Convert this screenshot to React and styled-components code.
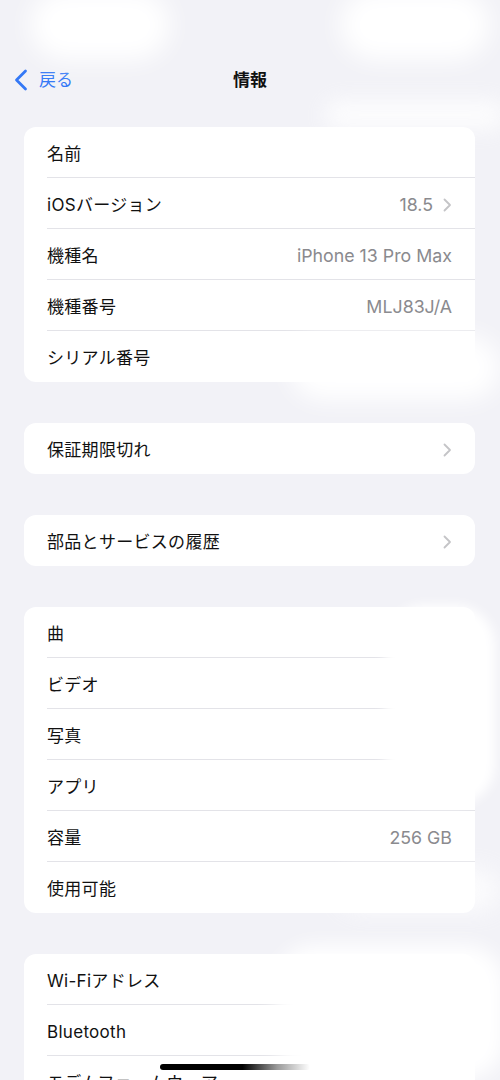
import React from 'react'
import { styled, createGlobalStyle } from 'styled-components'

const Global = createGlobalStyle`
    html, body {
        margin: 0;
        padding: 0;
        background: #f2f2f7;
        overflow: hidden;
    }
    body {
        font-family: "Inter", "Noto Sans CJK JP", sans-serif;
        -webkit-font-smoothing: antialiased;
    }
`

const Screen = styled.div`
    position: relative;
    width: 500px;
    height: 1080px;
    overflow: hidden;
    background: #f2f2f7;
    display: flex;
    flex-direction: column;
`

const NavBar = styled.div`
    flex-shrink: 0;
    display: grid;
    grid-template-columns: 1fr auto 1fr;
    align-items: center;
    height: 54px;
    padding: 53px 0 20px 14px;
`

const Back = styled.div`
    display: flex;
    align-items: center;
    gap: 11px;
    color: #3478f6;
    font-size: 17px;
    line-height: 22px;
`

const Title = styled.div`
    font-size: 17px;
    line-height: 22px;
    font-weight: 700;
    color: #111;
    transform: translateX(-7px);
`

const List = styled.div`
    flex-shrink: 0;
    display: flex;
    flex-direction: column;
    gap: 41px;
    padding: 0 25px 0 24px;
`

const Card = styled.div`
    flex-shrink: 0;
    display: flex;
    flex-direction: column;
    background: #fff;
    border-radius: 12px;
    overflow: hidden;
`

const Row = styled.div`
    flex-shrink: 0;
    box-sizing: border-box;
    height: 51px;
    padding-left: 23px;
    display: flex;
`

const RowInner = styled.div`
    flex: 1;
    display: flex;
    align-items: center;
    justify-content: space-between;
    padding: 3px 23px 0 0;
    border-bottom: ${(p) => (p.$last ? 'none' : '1px solid #e3e3e8')};
`

const Label = styled.span`
    font-size: 17px;
    line-height: 22px;
    color: #111;
    letter-spacing: 0.3px;
`

const Value = styled.span`
    display: flex;
    align-items: center;
    gap: 10px;
    font-size: 17.8px;
    line-height: 22px;
    color: #8a8a8e;
`

// blurred white patches that hide personal data in the screenshot
const Blob = styled.div`
    position: absolute;
    left: ${(p) => p.$x}px;
    top: ${(p) => p.$y}px;
    width: ${(p) => p.$w}px;
    height: ${(p) => p.$h}px;
    background: #fff;
    border-radius: 40px;
    filter: blur(${(p) => p.$b || 10}px);
    opacity: ${(p) => p.$o || 1};
    pointer-events: none;
`

const HomeBar = styled.div`
    position: absolute;
    left: 160px;
    bottom: 10px;
    width: 150px;
    height: 6px;
    border-radius: 3px;
    background: linear-gradient(to right, #000 0%, #000 55%, rgba(0,0,0,0.4) 78%, rgba(0,0,0,0) 100%);
`

const Chevron = () => (
    <svg width="9" height="14" viewBox="0 0 9 14">
        <path d="M1.5 1.5 L7 7 L1.5 12.5" fill="none" stroke="#c4c4c7" strokeWidth="1.8" strokeLinecap="round" strokeLinejoin="round" />
    </svg>
)

const BackChevron = () => (
    <svg width="14" height="22" viewBox="0 0 14 22">
        <path d="M11.5 2 L2.5 11 L11.5 20" fill="none" stroke="#3478f6" strokeWidth="2.8" strokeLinecap="round" strokeLinejoin="round" />
    </svg>
)

const Item = ({ label, value, chevron, last }) => (
    <Row>
        <RowInner $last={last}>
            <Label>{label}</Label>
            {(value || chevron) && (
                <Value>
                    {value}
                    {chevron && <Chevron />}
                </Value>
            )}
        </RowInner>
    </Row>
)

const App = () => {
    return (
        <Screen>
            <Global />
            <NavBar>
                <Back><BackChevron />戻る</Back>
                <Title>情報</Title>
            </NavBar>
            <List>
                <Card>
                    <Item label="名前" />
                    <Item label="iOSバージョン" value="18.5" chevron />
                    <Item label="機種名" value="iPhone 13 Pro Max" />
                    <Item label="機種番号" value="MLJ83J/A" />
                    <Item label="シリアル番号" last />
                </Card>
                <Card>
                    <Item label="保証期限切れ" chevron last />
                </Card>
                <Card>
                    <Item label="部品とサービスの履歴" chevron last />
                </Card>
                <Card>
                    <Item label="曲" />
                    <Item label="ビデオ" />
                    <Item label="写真" />
                    <Item label="アプリ" />
                    <Item label="容量" value="256 GB" />
                    <Item label="使用可能" last />
                </Card>
                <Card>
                    <Item label="Wi-Fiアドレス" />
                    <Item label="Bluetooth" />
                    <Item label="モデムファームウェア" />
                </Card>
            </List>

            <Blob $x={30} $y={-10} $w={140} $h={70} $b={12} />
            <Blob $x={340} $y={-10} $w={150} $h={70} $b={12} />
            <Blob $x={325} $y={100} $w={180} $h={30} $b={10} $o={0.8} />
            <Blob $x={290} $y={335} $w={210} $h={65} $b={12} />
            <Blob $x={385} $y={605} $w={110} $h={200} $b={6} />
            <Blob $x={340} $y={870} $w={160} $h={40} $b={12} $o={0.8} />
            <Blob $x={275} $y={945} $w={230} $h={135} $b={10} />
            <HomeBar />
        </Screen>
    )
}

export default App
